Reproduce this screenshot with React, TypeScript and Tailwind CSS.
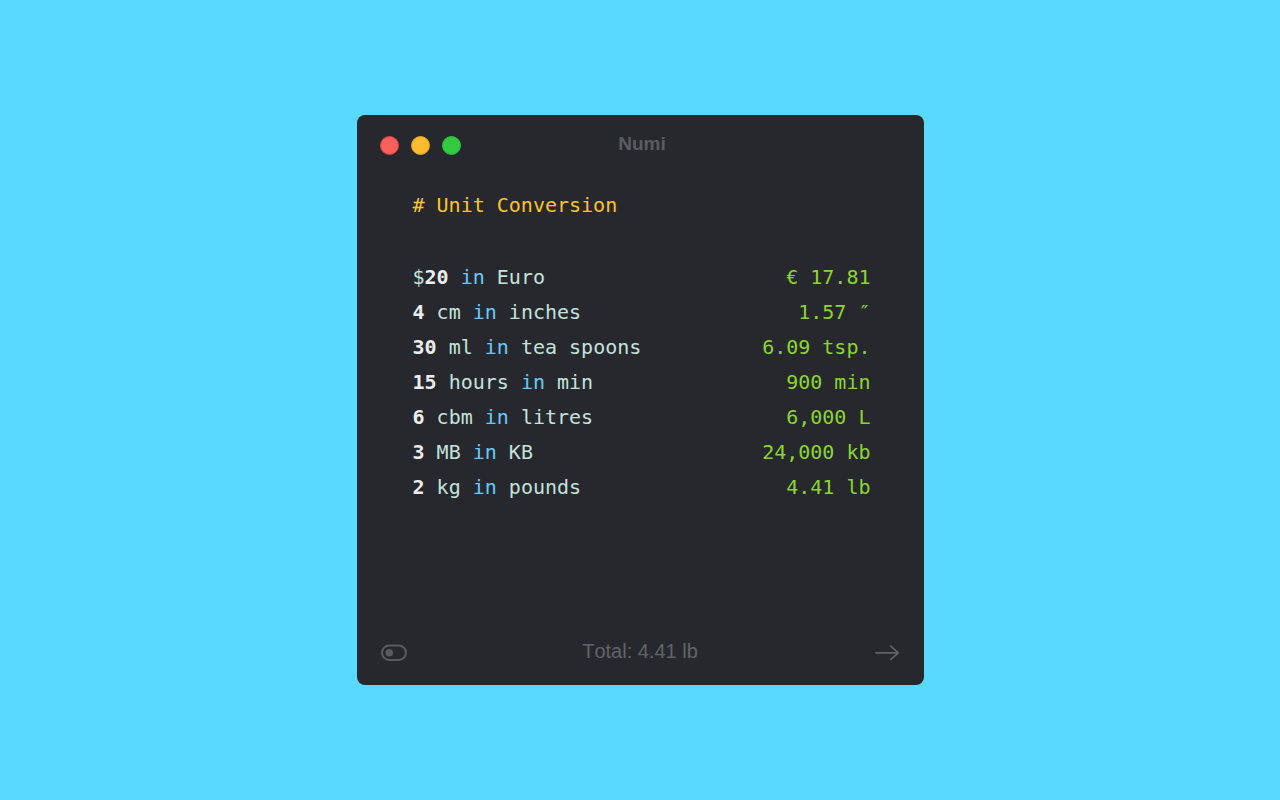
type Token = { text: string; kind: "number" | "operator" | "unit" }

type Line = { tokens: Token[]; result: string }

const tokenColors = {
    number: "font-bold text-[#eceded]",
    operator: "text-[#66c8fa]",
    unit: "text-[#c4e2dc]",
}

const num = (text: string): Token => ({ text, kind: "number" })
const op = (text: string): Token => ({ text, kind: "operator" })
const unit = (text: string): Token => ({ text, kind: "unit" })

const lines: Line[] = [
    { tokens: [unit("$"), num("20"), op(" in "), unit("Euro")], result: "€ 17.81" },
    { tokens: [num("4"), unit(" cm"), op(" in "), unit("inches")], result: "1.57 ″" },
    { tokens: [num("30"), unit(" ml"), op(" in "), unit("tea spoons")], result: "6.09 tsp." },
    { tokens: [num("15"), unit(" hours"), op(" in "), unit("min")], result: "900 min" },
    { tokens: [num("6"), unit(" cbm"), op(" in "), unit("litres")], result: "6,000 L" },
    { tokens: [num("3"), unit(" MB"), op(" in "), unit("KB")], result: "24,000 kb" },
    { tokens: [num("2"), unit(" kg"), op(" in "), unit("pounds")], result: "4.41 lb" },
]

function WindowButtons() {
    return (
        <div className="flex gap-3">
            <button aria-label="Close" className="size-[19px] rounded-full border border-[#e2463f] bg-[#fc605b]" />
            <button aria-label="Minimize" className="size-[19px] rounded-full border border-[#dfa023] bg-[#fdbc2e]" />
            <button aria-label="Zoom" className="size-[19px] rounded-full border border-[#2dc03b] bg-[#33c941]" />
        </div>
    )
}

function TitleBar() {
    return (
        <header className="grid grid-cols-[1fr_auto_1fr] items-start px-[23px] pt-[17px]">
            <div className="pt-1">
                <WindowButtons />
            </div>
            <h1 className="pl-1 font-['Liberation_Sans',sans-serif] text-[19px] leading-6 font-bold text-[#5b5c60]">Numi</h1>
        </header>
    )
}

function Sheet() {
    return (
        <main className="flex-1 px-[53px] pt-8 font-['DejaVu_Sans_Mono',monospace] text-xl">
            <h2 className="pl-[3px] leading-[35px] text-[#ffc22e]"># Unit Conversion</h2>
            <table className="mt-[37px] w-full">
                <tbody>
                    {lines.map((line) => (
                        <tr key={line.result}>
                            <td className="pl-[3px] leading-[35px] whitespace-pre">
                                {line.tokens.map((token, i) => (
                                    <span key={i} className={tokenColors[token.kind]}>{token.text}</span>
                                ))}
                            </td>
                            <td className="text-right leading-[35px] whitespace-pre text-[#8bd52f]">{line.result}</td>
                        </tr>
                    ))}
                </tbody>
            </table>
        </main>
    )
}

function Footer() {
    return (
        <footer className="grid grid-cols-[1fr_auto_1fr] items-center px-6 pb-4">
            <button aria-label="Settings" className="justify-self-start">
                <svg width="26" height="18" viewBox="0 0 26 18" fill="none">
                    <rect x="1" y="1.5" width="24" height="14.5" rx="7.25" stroke="#5a5b5f" strokeWidth="2" />
                    <circle cx="8.3" cy="8.7" r="3.7" fill="#5a5b5f" />
                </svg>
            </button>
            <p className="pb-1 font-['Liberation_Sans',sans-serif] text-xl leading-7 text-[#626367] [font-kerning:none]">Total: 4.41 lb</p>
            <button aria-label="Export" className="justify-self-end">
                <svg width="26" height="18" viewBox="0 0 26 18" fill="none" stroke="#626367" strokeWidth="1.7" strokeLinecap="round" strokeLinejoin="round">
                    <path d="M2 8.8H24.3M16.8 2.2L24.3 8.8L16.8 15.4" />
                </svg>
            </button>
        </footer>
    )
}

export default function App() {
    return (
        <div className="flex min-h-screen items-center justify-center bg-[#59d9ff]">
            <div className="flex min-h-[570px] w-full max-w-[567px] flex-col rounded-lg bg-[#27282d]">
                <TitleBar />
                <Sheet />
                <Footer />
            </div>
        </div>
    )
}
